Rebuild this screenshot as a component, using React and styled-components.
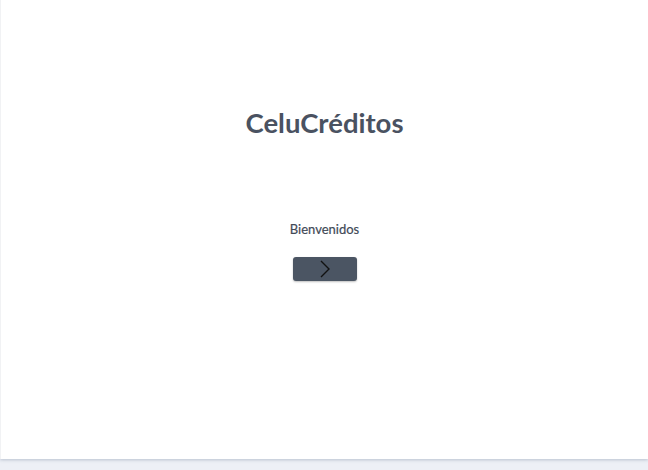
import * as React from 'react';
import styled, { createGlobalStyle } from 'styled-components';

const GlobalStyle = createGlobalStyle`
  html, body {
    margin: 0;
    padding: 0;
    background: #edf0f6;
    font-family: Lato, "Liberation Sans", sans-serif;
  }
`;

const Page = styled.div`
  width: 648px;
  height: 470px;
  display: flex;
  flex-flow: column;
`;

const Card = styled.div`
  flex: 0 0 459px;
  background: #ffffff;
  border-left: 1px solid #f1f2f4;
  box-shadow: 0 1px 3px 0 rgba(120, 135, 160, 0.45);
  display: flex;
  flex-flow: column;
  align-items: center;
  padding-top: 106px;
  box-sizing: border-box;
`;

const Title = styled.h1`
  margin: 0;
  font-size: 27.5px;
  font-weight: 700;
  color: #4a5261;
  line-height: 34px;
`;

const Welcome = styled.p`
  margin: 81px 0 0;
  font-size: 13px;
  color: #424a57;
  line-height: 17px;
  -webkit-text-stroke: 0.2px #424a57;
`;

const NextButton = styled.button`
  margin-top: 19px;
  width: 64px;
  height: 24px;
  padding: 0;
  border: none;
  border-radius: 3px;
  background: #4b5563;
  box-shadow: 0 1px 2px 0 rgba(0, 0, 0, 0.25);
  display: flex;
  align-items: center;
  justify-content: center;
  cursor: pointer;
`;

export default function App() {
  return (
    <React.Fragment>
      <GlobalStyle />
      <Page>
        <Card>
          <Title>CeluCréditos</Title>
          <Welcome>Bienvenidos</Welcome>
          <NextButton>
            <svg width="14" height="20" viewBox="0 0 14 20">
              <path d="M3 2 L11 10 L3 18" fill="none" stroke="#111" strokeWidth="1.4" />
            </svg>
          </NextButton>
        </Card>
      </Page>
    </React.Fragment>
  );
}
